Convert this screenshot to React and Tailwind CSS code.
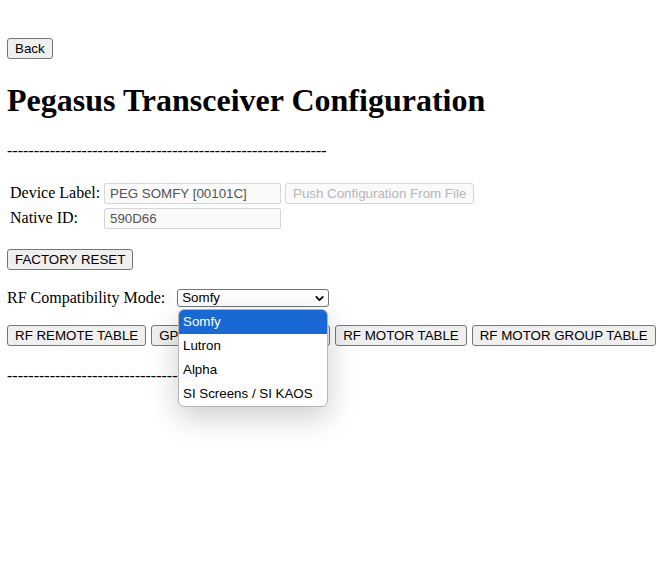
import { ChevronDown } from 'lucide-react';

const serif = "font-['Liberation_Serif',serif]";
const sans = "font-['Liberation_Sans',Arial,sans-serif]";

const btn =
  `${sans} text-[13.33px] leading-[17px] text-black bg-[#efefef] border border-[#767676] rounded-[3px] px-[7px] py-[1px] whitespace-nowrap`;

const DASHES = '-'.repeat(60);

const MODES = ['Somfy', 'Lutron', 'Alpha', 'SI Screens / SI KAOS'];

function FieldInput({ value }) {
  return (
    <div
      className={`${sans} w-[177px] h-[21px] text-[13.33px] leading-[19px] px-[5px] text-[#545454] bg-[#fafafa] border border-[#d6d6d6] rounded-[2px]`}
    >
      {value}
    </div>
  );
}

export default function App() {
  return (
    <div className={`${serif} w-[668px] h-[577px] bg-white text-black text-[16px] px-[7px] pt-[38px] relative`}>
      <div className="flex">
        <button className={btn}>Back</button>
      </div>

      <h1 className={`${serif} text-[32px] font-bold leading-[37px] mt-[23px]`}>
        Pegasus Transceiver Configuration
      </h1>

      <div className="leading-[18px] mt-[23px]">{DASHES}</div>

      {/* device info table */}
      <div className="mt-[22px] ml-[3px] flex flex-col gap-[3px]">
        <div className="flex items-center h-[22px]">
          <span className="w-[94px]">Device Label:</span>
          <FieldInput value="PEG SOMFY [00101C]" />
          <button
            className={`${sans} ml-[4px] h-[21px] text-[13.33px] leading-[17px] px-[7px] text-[#b7b7b7] bg-[#fafafa] border border-[#d6d6d6] rounded-[3px]`}
          >
            Push Configuration From File
          </button>
        </div>
        <div className="flex items-center h-[22px]">
          <span className="w-[94px]">Native ID:</span>
          <FieldInput value="590D66" />
        </div>
      </div>

      <div className="flex mt-[20px]">
        <button className={btn}>FACTORY RESET</button>
      </div>

      <div className="flex items-center mt-[16px]">
        <span className="mr-[12px]">RF Compatibility Mode:</span>
        <div
          className={`${sans} w-[152px] h-[18px] flex items-center justify-between pl-[4px] pr-[2px] text-[13.33px] border border-[#767676] rounded-[3px]`}
        >
          <span>Somfy</span>
          <ChevronDown size={13} strokeWidth={3.2} />
        </div>
      </div>

      <div className="flex gap-[5px] mt-[15px]">
        <button className={btn}>RF REMOTE TABLE</button>
        <button className={`${btn} w-[179px] text-left`}>GPIO EVENT TABLE</button>
        <button className={btn}>RF MOTOR TABLE</button>
        <button className={btn}>RF MOTOR GROUP TABLE</button>
      </div>

      <div className="leading-[18px] mt-[21px]">{DASHES}</div>

      {/* open select popup */}
      <div
        className={`${sans} absolute left-[178px] top-[309px] w-[150px] bg-white border border-[#b5b5b5] rounded-[6px] overflow-hidden shadow-[0_10px_30px_rgba(0,0,0,0.2)] text-[13.33px]`}
      >
        {MODES.map((m, i) => (
          <div
            key={m}
            className={`h-[24px] leading-[24px] pl-[4px] ${i === 0 ? 'bg-[#1a68d3] text-white' : 'text-black'}`}
          >
            {m}
          </div>
        ))}
      </div>
    </div>
  );
}
